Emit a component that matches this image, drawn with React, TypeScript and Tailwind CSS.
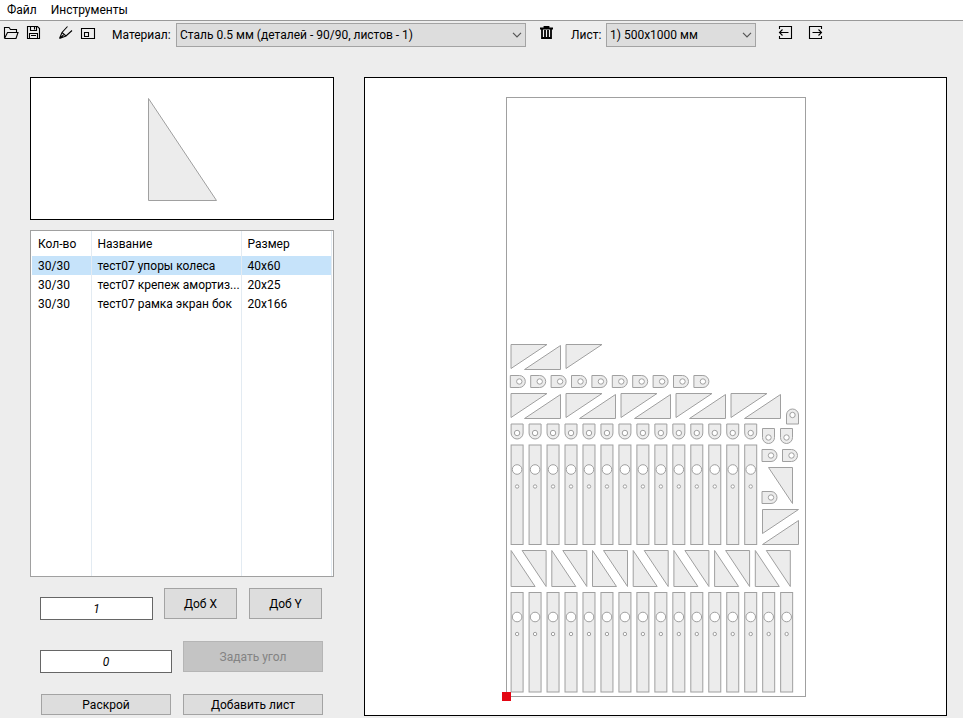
import { useState, type ReactNode } from "react";

const parts = [
  { count: "30/30", name: "тест07 упоры колеса", size: "40x60" },
  { count: "30/30", name: "тест07 крепеж амортиз...", size: "20x25" },
  { count: "30/30", name: "тест07 рамка экран бок", size: "20x166" },
];

const range = (n: number) => Array.from({ length: n }, (_, i) => i);

function IconButton({ label, children }: { label: string; children: ReactNode }) {
  return (
    <button type="button" aria-label={label} title={label} className="block size-4 shrink-0">
      <svg viewBox="0 0 16 16" className="size-4" fill="none" stroke="#000" strokeWidth="1.1">
        {children}
      </svg>
    </button>
  );
}

function Combo({ id, value, className }: { id: string; value: string; className: string }) {
  return (
    <div className={`relative ${className}`}>
      <select
        id={id}
        className="block h-6 w-full appearance-none border border-[#a3a3a3] bg-[#dddddd] pr-6 pl-[3px] text-black"
      >
        <option>{value}</option>
      </select>
      <svg
        viewBox="0 0 10 6"
        className="pointer-events-none absolute top-[9px] right-1 h-1.5 w-2.5"
        fill="none"
        stroke="#555"
        strokeWidth="1.2"
      >
        <path d="M1 0.8 5 4.8 9 0.8" />
      </svg>
    </div>
  );
}

/* Mounting tab, rounded end to the right */
function TabRight({ x, y }: { x: number; y: number }) {
  return (
    <g transform={`translate(${x} ${y})`}>
      <path d="M0 0H9A6 6 0 0 1 9 12H0Z" />
      <circle cx="9" cy="6" r="2.7" fill="#fff" />
    </g>
  );
}

/* Mounting tab, rounded end down (or up when flipped) */
function TabDown({ x, y, flip = false }: { x: number; y: number; flip?: boolean }) {
  return (
    <g transform={flip ? `translate(${x} ${y + 15}) scale(1 -1)` : `translate(${x} ${y})`}>
      <path d="M0 0H12V9A6 6 0 0 1 0 9Z" />
      <circle cx="6" cy="9" r="2.7" fill="#fff" />
    </g>
  );
}

function Bar({ x, y }: { x: number; y: number }) {
  return (
    <g transform={`translate(${x} ${y})`}>
      <rect width="12" height="99.5" />
      <circle cx="6" cy="24.5" r="4.8" fill="#fff" />
      <circle cx="6" cy="41.5" r="1.7" fill="#fff" />
    </g>
  );
}

function SheetDrawing() {
  return (
    <svg viewBox="0 0 581 637" className="block h-auto w-full" role="img" aria-label="Раскрой листа">
      <g transform="translate(141.5 19.5)" fill="#ececec" stroke="#a0a0a0" strokeWidth="1">
        <rect width="299" height="599" fill="#fff" />
        <path d="M4.500 247H40.500L4.500 271Z M54 248V272H18Z M59.500 247H95.500L59.500 271Z" />
        {range(10).map((i) => (
          <TabRight key={i} x={3.8 + i * 20.4} y={278} />
        ))}
        {range(5).map((i) => (
          <path key={i} transform={`translate(${i * 55} 0)`} d="M4.500 296H40.500L4.500 320Z M54 297V321H18Z" />
        ))}
        {range(14).map((i) => (
          <TabDown key={i} x={4.6 + i * 17.97} y={326.5} />
        ))}
        {range(14).map((i) => (
          <Bar key={i} x={4.6 + i * 17.97} y={347.5} />
        ))}
        {range(7).map((i) => (
          <path
            key={i}
            transform={`translate(${i * 40.7} 0)`}
            d="M4.600 453V489H28.600Z M15.600 453H39.600V489Z"
          />
        ))}
        {range(16).map((i) => (
          <Bar key={i} x={4.6 + i * 17.97} y={495} />
        ))}
        <TabDown x={280} y={311.5} flip />
        <TabDown x={256} y={331} />
        <TabDown x={274} y={331} />
        <TabRight x={255.5} y={352} />
        <TabRight x={276} y={352} />
        <TabRight x={255.5} y={394} />
        <path d="M262 370H286V406Z M256 412H292L256 436Z M292 423V447H256Z" />
      </g>
      <rect x="137" y="614" width="9" height="9" fill="#e30613" />
    </svg>
  );
}

const buttonBase = "border border-[#a3a3a3] bg-[#dddddd] text-center text-black";
const fieldBase = "-mb-px h-[23px] border border-[#666] bg-white text-center text-black italic";

export default function App() {
  const [selected, setSelected] = useState(0);
  return (
    <div className="flex min-h-screen flex-col bg-[#ededed] font-['Roboto','Noto_Sans',sans-serif] text-[12px] leading-4 text-black">
      <nav className="flex h-5 items-center gap-3.5 bg-white px-[7px]">
        <button type="button">Файл</button>
        <button type="button">Инструменты</button>
      </nav>

      <div className="flex h-[57px] items-start border-t border-[#999] pt-0.5 pl-[3px]">
        <div className="flex h-[18px] items-center">
          <IconButton label="Открыть">
            <path d="M1.500 14.500V3.500H6L7.500 5.500H13.500V8.500M1.500 14.500 4.500 8.500H15L13 14.500H1.500" />
          </IconButton>
          <span className="w-[7px]" />
          <IconButton label="Сохранить">
            <path d="M1.500 2.500H11.500L13.500 4.500V14.500H1.500ZM4.500 2.500V6.500H10.500V2.500M8.500 3V5.500M3.500 14.500V9.500H11.500V14.500M5 11.500H10" />
          </IconButton>
          <span className="w-4" />
          <IconButton label="Править">
            <path d="M1.500 14.500 4 8.500 9.500 2.500M4 8.500 8 12 14 6.500M1.500 14.500 8 12M1.500 14.500 5.500 11" />
          </IconButton>
          <span className="w-[6px]" />
          <IconButton label="Размер листа">
            <path d="M1.500 4.500H14.500V14.500H1.500ZM4.500 8.500H8.500V12.500H4.500Z" />
          </IconButton>
        </div>
        <label htmlFor="material" className="ml-4 w-16 leading-6">
          Материал:
        </label>
        <Combo id="material" value="Сталь 0.5 мм (деталей - 90/90, листов - 1)" className="w-[350px]" />
        <div className="mr-4 ml-[13px] flex h-[18px] items-center">
          <IconButton label="Удалить">
            <path
              d="M1 4.500H14M5.500 4.500V3H9.500V4.500M3 5V14H12V5M6 6V13M9 6V13"
              strokeWidth="1.8"
            />
          </IconButton>
        </div>
        <label htmlFor="sheet" className="w-[35px] leading-6">
          Лист:
        </label>
        <Combo id="sheet" value="1) 500x1000 мм" className="w-[150px]" />
        <div className="ml-[21px] flex h-[18px] items-center gap-3.5">
          <IconButton label="Предыдущий лист">
            <path d="M2.500 5V2.500H14.500V14.500H2.500V12M11.500 8.500H2.500M5.500 5.500 2.500 8.500 5.500 11.500" />
          </IconButton>
          <IconButton label="Следующий лист">
            <path d="M14.500 5V2.500H2.500V14.500H14.500V12M5.500 8.500H14.500M11.500 5.500 14.500 8.500 11.500 11.500" />
          </IconButton>
        </div>
      </div>

      <main className="flex flex-1 items-start gap-[30px] pr-4 pl-[30px]">
        <section className="flex w-[304px] shrink-0 flex-col">
          <div className="h-[143px] border border-black bg-white">
            <svg viewBox="0 0 302 141" className="block w-full" role="img" aria-label="Деталь">
              <path d="M117.500 20.500V122.500H185.500Z" fill="#ececec" stroke="#a0a0a0" />
            </svg>
          </div>

          <div className="mt-[10px] h-[347px] border border-[#a0a0a0] bg-white px-px">
            <table className="h-full w-full table-fixed border-collapse text-left">
              <colgroup>
                <col className="w-[59px]" />
                <col className="w-[150px]" />
                <col />
              </colgroup>
              <thead>
                <tr className="h-[25px]">
                  <th className="border-r border-[#e3ebf2] p-0 pl-1.5 font-normal">Кол-во</th>
                  <th className="border-r border-[#e3ebf2] p-0 pl-1.5 font-normal">Название</th>
                  <th className="border-r border-[#e3ebf2] p-0 pl-1.5 font-normal">Размер</th>
                </tr>
              </thead>
              <tbody>
                {parts.map((p, i) => (
                  <tr
                    key={p.name}
                    onClick={() => setSelected(i)}
                    className={i === selected ? "h-[19px] bg-[#c6e3fa]" : "h-[19px]"}
                  >
                    <td className="border-r border-[#e3ebf2] p-0 pl-1.5">{p.count}</td>
                    <td className="border-r border-[#e3ebf2] p-0 pl-1.5 whitespace-nowrap">{p.name}</td>
                    <td className="border-r border-[#e3ebf2] p-0 pl-1.5">{p.size}</td>
                  </tr>
                ))}
                <tr>
                  <td className="border-r border-[#e3ebf2] p-0" />
                  <td className="border-r border-[#e3ebf2] p-0" />
                  <td className="border-r border-[#e3ebf2] p-0" />
                </tr>
              </tbody>
            </table>
          </div>

          <div className="flex flex-col gap-[22px] pt-[11px] pr-[11px] pl-[10px]">
            <div className="flex items-end">
              <input aria-label="Количество" defaultValue="1" className={`${fieldBase} w-[113px]`} />
              <button type="button" className={`${buttonBase} ml-[11px] h-[31px] w-[73px]`}>
                Доб X
              </button>
              <button type="button" className={`${buttonBase} ml-3 h-[31px] w-[73px]`}>
                Доб Y
              </button>
            </div>
            <div className="flex items-end gap-[11px]">
              <input aria-label="Угол" defaultValue="0" className={`${fieldBase} w-[132px]`} />
              <button
                type="button"
                disabled
                className="h-[31px] flex-1 border border-[#b5b5b5] bg-[#c4c4c4] text-center text-[#838383]"
              >
                Задать угол
              </button>
            </div>
            <div className="flex gap-3 pl-px">
              <button type="button" className={`${buttonBase} h-[21px] w-[130px] leading-none`}>
                Раскрой
              </button>
              <button type="button" className={`${buttonBase} h-[21px] flex-1 leading-none`}>
                Добавить лист
              </button>
            </div>
          </div>
        </section>

        <section className="min-w-0 flex-1 border border-black bg-white">
          <SheetDrawing />
        </section>
      </main>
    </div>
  );
}
